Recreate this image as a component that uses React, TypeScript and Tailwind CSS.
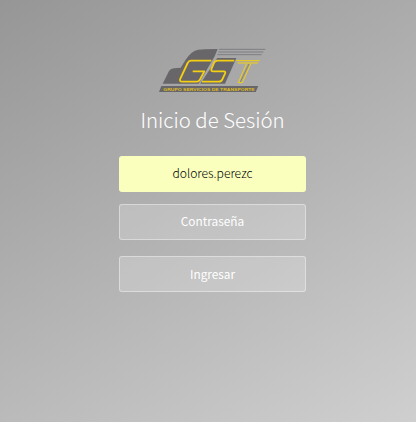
function Logo() {
  return (
    <svg
      className="block h-[46px] w-[110px]"
      viewBox="24 24 330 138"
      role="img"
      aria-label="GST Grupo Servicios de Transporte"
    >
      <g fill="#69666a">
        <path d="M38 131 54 99Q58 87 72 85L92 83 108 58Q124 33 145 29Q155 27 203 27L194 49 146 131Z" />
        <path d="M202 54H259L225 131H151Z" />
        <path d="M34 138H325L317 156H27Z" />
      </g>
      <g fill="none" stroke="#77757a" strokeWidth="2.5">
        <path d="M207 28H346M205 36H340M202 44H335" />
      </g>
      <g fill="none" stroke="#f4cf12" strokeWidth="5.5" strokeLinejoin="round">
        <path d="M184 62H123Q116 62 113 69L91 116Q87 125 97 125H141Q147 125 150 118L163 94H128" />
        <path d="M253 62H203Q195 62 192 69L185 85Q181 94 190 94H221Q228 94 225 101L217 118Q214 125 206 125H156" />
        <path d="M258 62H329M263 69H324" strokeWidth="3" />
        <path d="M290 70 265 128M303 70 277 128H265" strokeWidth="3" />
        <path d="M297 72 271 126" stroke="#8d8560" strokeWidth="3" />
      </g>
      <text
        x="40"
        y="151.5"
        fill="#dfbd20"
        fontFamily="Liberation Sans, sans-serif"
        fontWeight="700"
        fontSize="12.5"
        textLength="274"
        lengthAdjust="spacingAndGlyphs"
      >
        GRUPO SERVICIOS DE TRANSPORTE
      </text>
    </svg>
  );
}

export default function App() {
  return (
    <main className="flex h-[422px] w-full flex-col items-center overflow-hidden bg-[linear-gradient(150deg,#969696_0%,#cfcfcf_100%)] pt-12 pl-[9px] font-['Noto_Sans_CJK_SC',sans-serif] font-light text-white">
      <Logo />
      <h1 className="mt-2 text-[20.4px] leading-[34px] font-light whitespace-nowrap">
        Inicio de Sesión
      </h1>
      <form className="mt-5 flex w-[187px] flex-col" onSubmit={(e) => e.preventDefault()}>
        <input
          aria-label="Usuario"
          defaultValue="dolores.perezc"
          className="h-9 w-full rounded-[3px] bg-[#faffbd] pb-1 text-center text-[12.1px] text-black outline-none"
        />
        <input
          aria-label="Contraseña"
          placeholder="Contraseña"
          className="mt-3 h-9 w-full rounded-[3px] border border-white/40 bg-white/20 pb-1 text-center text-[11.9px] font-normal outline-none placeholder:text-white"
        />
        <button className="mt-4 h-9 w-full rounded-[3px] border border-white/40 bg-white/20 text-[11.8px] font-normal">
          Ingresar
        </button>
      </form>
    </main>
  );
}
